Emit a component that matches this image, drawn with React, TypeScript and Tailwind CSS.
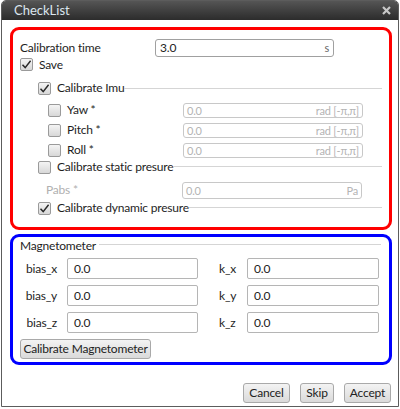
import React from "react";

const font = { fontFamily: 'Lato, "Noto Sans", sans-serif' };

function Check({ checked }: { checked?: boolean }) {
  return (
    <div className="w-[13px] h-[13px] shrink-0 rounded-[2px] border border-[#9a9a9a] bg-gradient-to-b from-[#f4f4f4] to-[#d8d8d8] flex items-center justify-center">
      {checked && (
        <svg width="11" height="11" viewBox="0 0 11 11">
          <path d="M1.5 5.8 L4.2 8.6 L9.6 1.8" fill="none" stroke="#2a2a2a" strokeWidth="1.5" />
        </svg>
      )}
    </div>
  );
}

function DisabledInput({ unit }: { unit: string }) {
  return (
    <div className="w-[180px] h-[15px] rounded-[3px] border border-[#c8c8c8] bg-white flex items-center justify-between px-[3px] text-[11px] text-[#b4b4b4] leading-none">
      <span>0.0</span>
      <span>{unit}</span>
    </div>
  );
}

function Field({ w }: { w: string }) {
  return (
    <div className={`${w} h-[21px] rounded-[2px] border border-[#b5b5b5] bg-white flex items-center px-[6px] text-[12px] text-[#222]`}>
      0.0
    </div>
  );
}

function Btn({ children, w }: { children: React.ReactNode; w: string }) {
  return (
    <div className={`${w} h-[20px] rounded-[3px] border border-[#a9a9a9] bg-gradient-to-b from-[#f3f3f3] to-[#dadada] flex items-center justify-center text-[12px] text-[#222] whitespace-nowrap`}>
      {children}
    </div>
  );
}

export default function App() {
  return (
    <div className="w-[400px] h-[409px] bg-white text-[12px] tracking-[-0.2px] text-[#1e1e1e]" style={font}>
      <div className="ml-[1px] w-[398px] h-[407px] border border-[#5c5c5c] rounded-t-[5px] flex flex-col overflow-hidden">
        {/* title bar */}
        <div className="h-[19px] shrink-0 bg-gradient-to-b from-[#555555] to-[#2c2c2c] flex items-center justify-between pl-[12px] pr-[7px]">
          <span className="text-[13px] tracking-normal text-[#dce6ef] leading-none">CheckList</span>
          <svg width="9" height="9" viewBox="0 0 9 9">
            <path d="M1 1 L8 8 M8 1 L1 8" stroke="#c8c8c8" strokeWidth="2.2" />
          </svg>
        </div>

        <div className="flex-1 flex flex-col pl-[8px] pr-[6px] pt-[7px]">
          {/* red box */}
          <div className="h-[203px] border-[3px] border-[#ff0000] rounded-[9px] flex flex-col pl-[7px] pr-[7px] pt-[9px]">
            <div className="h-[18px] flex items-center">
              <span className="w-[135px]">Calibration time</span>
              <div className="w-[179px] h-[18px] rounded-[3px] border border-[#a0a0a0] flex items-center justify-between px-[4px] text-[12px]">
                <span>3.0</span>
                <span className="text-[11px] text-[#666]">s</span>
              </div>
            </div>
            <div className="h-[13px] mt-[1px] flex items-center gap-[6px]">
              <Check checked />
              <span>Save</span>
            </div>
            {/* Calibrate Imu */}
            <div className="h-[14px] mt-[10px] flex items-center pl-[18px]">
              <Check checked />
              <span className="ml-[6px] whitespace-nowrap">Calibrate Imu</span>
              <div className="flex-1 h-px bg-[#d5d5d5] mt-[1px]" />
            </div>
            <div className="mt-[5px] flex flex-col">
              {["Yaw *", "Pitch *", "Roll *"].map((l) => (
                <div key={l} className="h-[20px] flex items-center pl-[28px]">
                  <Check />
                  <span className="ml-[6px] w-[116px]">{l}</span>
                  <DisabledInput unit="rad [-π,π]" />
                </div>
              ))}
            </div>
            {/* static */}
            <div className="h-[14px] mt-[0px] flex items-center pl-[18px]">
              <Check />
              <span className="ml-[6px] whitespace-nowrap">Calibrate static presure</span>
              <div className="flex-1 h-px bg-[#d5d5d5] -mt-[2px]" />
            </div>
            <div className="h-[18px] mt-[7px] flex items-center pl-[26px]">
              <span className="w-[136px] text-[#b0b0b0]">Pabs *</span>
              <div className="w-[180px] h-[17px] rounded-[3px] border border-[#c8c8c8] bg-white flex items-center justify-between px-[3px] text-[11px] text-[#b4b4b4] leading-none">
                <span>0.0</span>
                <span>Pa</span>
              </div>
            </div>
            <div className="h-[14px] mt-[2px] flex items-center pl-[18px]">
              <Check checked />
              <span className="ml-[6px] whitespace-nowrap">Calibrate dynamic presure</span>
              <div className="flex-1 h-px bg-[#d5d5d5] -mt-[2px]" />
            </div>
          </div>

          {/* blue box */}
          <div className="mt-[4px] h-[131px] border-[3px] border-[#0000ff] rounded-[9px] flex flex-col pl-[7px] pr-[8px]">
            <div className="h-[14px] mt-[2px] flex items-center">
              <span className="whitespace-nowrap">Magnetometer</span>
              <div className="flex-1 h-px bg-[#d5d5d5] -mt-[3px] ml-[3px]" />
            </div>
            <div className="mt-[5px] flex flex-col gap-[6px]">
              {["x", "y", "z"].map((a) => (
                <div key={a} className="h-[21px] flex items-center">
                  <span className="w-[37px] text-right">bias_{a}</span>
                  <div className="ml-[10px]">
                    <Field w="w-[131px]" />
                  </div>
                  <span className="ml-[21px] w-[28px]">k_{a}</span>
                  <Field w="w-[132px]" />
                </div>
              ))}
            </div>
            <div className="mt-[6px]">
              <Btn w="w-[131px]">Calibrate Magnetometer</Btn>
            </div>
          </div>

          {/* bottom buttons */}
          <div className="mt-[18px] flex justify-end gap-[10px] pr-[1px]">
            <Btn w="w-[47px]">Cancel</Btn>
            <Btn w="w-[34px]">Skip</Btn>
            <Btn w="w-[47px]">Accept</Btn>
          </div>
        </div>
      </div>
    </div>
  );
}
